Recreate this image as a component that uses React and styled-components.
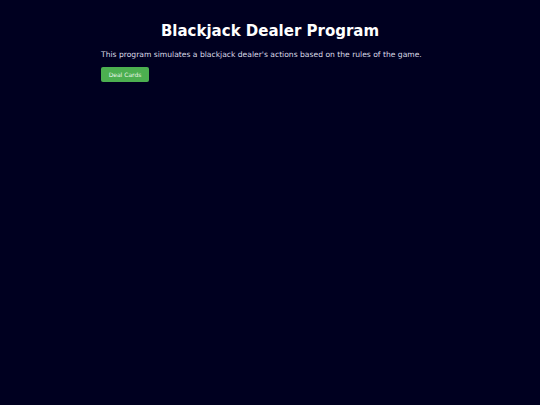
import React from 'react';
import styled, {createGlobalStyle} from 'styled-components';

const GlobalStyle = createGlobalStyle`
  html, body {
    margin: 0;
    padding: 0;
    background: #000020;
  }
  body {
    font-family: "DejaVu Sans", sans-serif;
    color: #ffffff;
  }
`

const Page = styled.div`
  min-height: 405px;
  background: #000020;
`

const Container = styled.div`
  width: 338px;
  margin: 0 auto;
  padding-top: 22px;
`

const Title = styled.h1`
  margin: 0 0 10px;
  text-align: center;
  font-size: 15px;
  font-weight: bold;
  line-height: 18px;
  color: #ffffff;
`

const Intro = styled.p`
  margin: 0 0 7px;
  font-size: 7.6px;
  line-height: 10px;
  color: #dcdce8;
`

const DealButton = styled.button`
  display: block;
  height: 15px;
  width: 48px;
  padding: 0;
  border: none;
  border-radius: 2px;
  background: #4caf50;
  color: #e8f5e9;
  font-family: "DejaVu Sans", sans-serif;
  font-size: 6px;
  cursor: pointer;
`

export default function App() {
  return (
    <Page>
      <GlobalStyle />
      <Container>
        <Title>Blackjack Dealer Program</Title>
        <Intro>This program simulates a blackjack dealer's actions based on the rules of the game.</Intro>
        <DealButton>Deal Cards</DealButton>
      </Container>
    </Page>
  );
}
